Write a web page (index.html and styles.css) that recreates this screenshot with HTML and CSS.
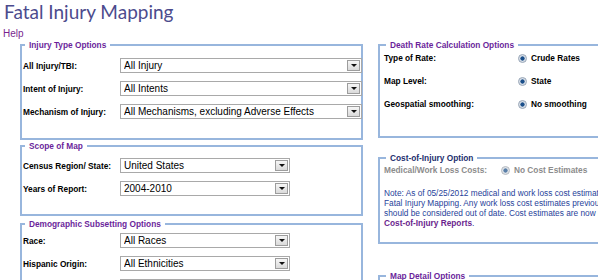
FILE: index.html
```html
<!DOCTYPE html>
<html>
<head>
<meta charset="utf-8">
<title>Fatal Injury Mapping</title>
<link rel="stylesheet" href="styles.css">
</head>
<body>
<h1 class="title">Fatal Injury Mapping</h1>
<a class="help" href="#">Help</a>
<div class="columns">
  <div class="col-left">
    <fieldset class="box box-injury">
      <legend>Injury Type Options</legend>
      <div class="row"><span class="lbl">All Injury/TBI:</span><div class="sel sel-wide"><span class="txt">All Injury</span><span class="arr"></span></div></div>
      <div class="row"><span class="lbl">Intent of Injury:</span><div class="sel sel-wide"><span class="txt">All Intents</span><span class="arr"></span></div></div>
      <div class="row"><span class="lbl">Mechanism of Injury:</span><div class="sel sel-wide"><span class="txt">All Mechanisms, excluding Adverse Effects</span><span class="arr"></span></div></div>
    </fieldset>
    <fieldset class="box box-scope">
      <legend>Scope of Map</legend>
      <div class="row"><span class="lbl">Census Region/ State:</span><div class="sel sel-mid"><span class="txt">United States</span><span class="arr"></span></div></div>
      <div class="row"><span class="lbl">Years of Report:</span><div class="sel sel-mid"><span class="txt">2004-2010</span><span class="arr"></span></div></div>
    </fieldset>
    <fieldset class="box box-demo">
      <legend>Demographic Subsetting Options</legend>
      <div class="row"><span class="lbl">Race:</span><div class="sel sel-mid"><span class="txt">All Races</span><span class="arr"></span></div></div>
      <div class="row"><span class="lbl">Hispanic Origin:</span><div class="sel sel-mid"><span class="txt">All Ethnicities</span><span class="arr"></span></div></div>
      <div class="row"><span class="lbl">Sex:</span><div class="sel sel-mid"><span class="txt">Both Sexes</span><span class="arr"></span></div></div>
    </fieldset>
  </div>
  <div class="col-right">
    <fieldset class="box box-rate">
      <legend>Death Rate Calculation Options</legend>
      <div class="rrow"><span class="rlbl">Type of Rate:</span><span class="radio"></span><span class="rtxt">Crude Rates</span></div>
      <div class="rrow"><span class="rlbl">Map Level:</span><span class="radio"></span><span class="rtxt">State</span></div>
      <div class="rrow"><span class="rlbl">Geospatial smoothing:</span><span class="radio"></span><span class="rtxt">No smoothing</span></div>
    </fieldset>
    <fieldset class="box box-cost">
      <legend class="legend-navy">Cost-of-Injury Option</legend>
      <div class="crow"><span class="clbl">Medical/Work Loss Costs:</span><span class="radio radio-off"></span><span class="ctxt">No Cost Estimates</span></div>
      <p class="note">Note: As of 05/25/2012 medical and work loss cost estimates are no longer available in<br>Fatal Injury Mapping. Any work loss cost estimates previously generated by WISQARS<br>should be considered out of date. Cost estimates are now provided in<br><a class="note-link" href="#">Cost-of-Injury Reports</a>.</p>
    </fieldset>
    <fieldset class="box box-detail">
      <legend>Map Detail Options</legend>
      <div class="rrow"><span class="rlbl">Number of Classes:</span></div>
    </fieldset>
  </div>
</div>
</body>
</html>
```

FILE: styles.css
```css
html, body {
  margin: 0;
  padding: 0;
}
body {
  width: 598px;
  height: 280px;
  overflow: hidden;
  font-family: "Liberation Sans", Arial, sans-serif;
  background: #fff;
  color: #000;
}
.title {
  margin: 0;
  padding: 1px 0 0 4px;
  font-family: Lato, "Open Sans", sans-serif;
  font-weight: normal;
  font-size: 19px;
  line-height: 21px;
  color: #4c4b8d;
}
.help {
  display: block;
  margin: 6px 0 0 3px;
  font-size: 10px;
  line-height: 12px;
  color: #7a1f8e;
  text-decoration: none;
}
.columns {
  display: flex;
  gap: 15px;
  padding-left: 20px;
  align-items: flex-start;
}
.col-left {
  flex: none;
  width: 343px;
  display: flex;
  flex-direction: column;
  gap: 1px;
}
.col-right {
  flex: none;
  width: 270px;
  display: flex;
  flex-direction: column;
}
.box {
  margin: 0;
  min-width: 0;
  border: 2px solid #98b6dd;
  padding: 0 0 0 1px;
}
.box legend {
  margin-left: 2px;
  padding: 0 4px;
  font-size: 8.3px;
  line-height: 10px;
  font-weight: bold;
  color: #6b1f9b;
}
.box .legend-navy {
  color: #1d2f6e;
}
.box-injury { padding-top: 4px; padding-bottom: 15px; }
.box-scope { padding-top: 3px; padding-bottom: 14px; }
.box-demo { padding-top: 0; margin-top: 2px; }
.row {
  display: flex;
  align-items: center;
  height: 23px;
}
.lbl {
  flex: none;
  width: 97px;
  font-size: 8.3px;
  font-weight: bold;
}
.sel {
  flex: none;
  display: flex;
  align-items: center;
  box-sizing: border-box;
  height: 15px;
  border: 1px solid #a9a9a9;
  background: #fff;
  padding-left: 3px;
  font-size: 10px;
}
.sel-wide { width: 242px; }
.sel-mid { width: 170px; }
.sel .txt {
  flex: 1;
  white-space: nowrap;
  overflow: hidden;
}
.arr {
  flex: none;
  box-sizing: border-box;
  width: 13px;
  height: 11px;
  margin-right: 1px;
  border: 1px solid #9d9d9d;
  background: linear-gradient(#f6f6f6, #dadada);
  display: flex;
  align-items: center;
  justify-content: center;
}
.arr::after {
  content: "";
  width: 0;
  height: 0;
  border-left: 3px solid transparent;
  border-right: 3px solid transparent;
  border-top: 3px solid #111;
}
.box-rate { padding: 1px 0 16px 4px; }
.rrow {
  display: flex;
  height: 23px;
  align-items: flex-start;
  padding-top: 1px;
  box-sizing: border-box;
  font-size: 8.3px;
  line-height: 12px;
  font-weight: bold;
}
.rlbl {
  flex: none;
  width: 134px;
}
.radio {
  flex: none;
  box-sizing: border-box;
  width: 9px;
  height: 9px;
  margin: 2px 4px 0 0;
  border-radius: 50%;
  border: 1px solid #95a3b5;
  background: radial-gradient(circle, #1b4f8a 0 1.8px, #cfd8e3 2.4px, #f4f6f8 100%);
}
.radio-off {
  border-color: #b3b8bf;
  background: radial-gradient(circle, #5a7fa8 0 1.8px, #d9dee4 2.4px, #f4f5f6 100%);
}
.rtxt { white-space: nowrap; }
.box-cost {
  margin-top: 15px;
  padding: 1px 0 14px 4px;
}
.crow {
  display: flex;
  align-items: flex-start;
  font-size: 8.3px;
  line-height: 12px;
  font-weight: bold;
  color: #8c8c8c;
}
.clbl {
  flex: none;
  width: 117px;
}
.ctxt { white-space: nowrap; }
.note {
  margin: 12px 0 0 0;
  font-size: 8.3px;
  line-height: 10px;
  color: #1f3f9a;
  white-space: nowrap;
}
.note-link {
  color: #6b1f8e;
  font-weight: bold;
  text-decoration: none;
}
.box-detail {
  margin-top: 27px;
  padding: 2px 0 4px 4px;
}
```
